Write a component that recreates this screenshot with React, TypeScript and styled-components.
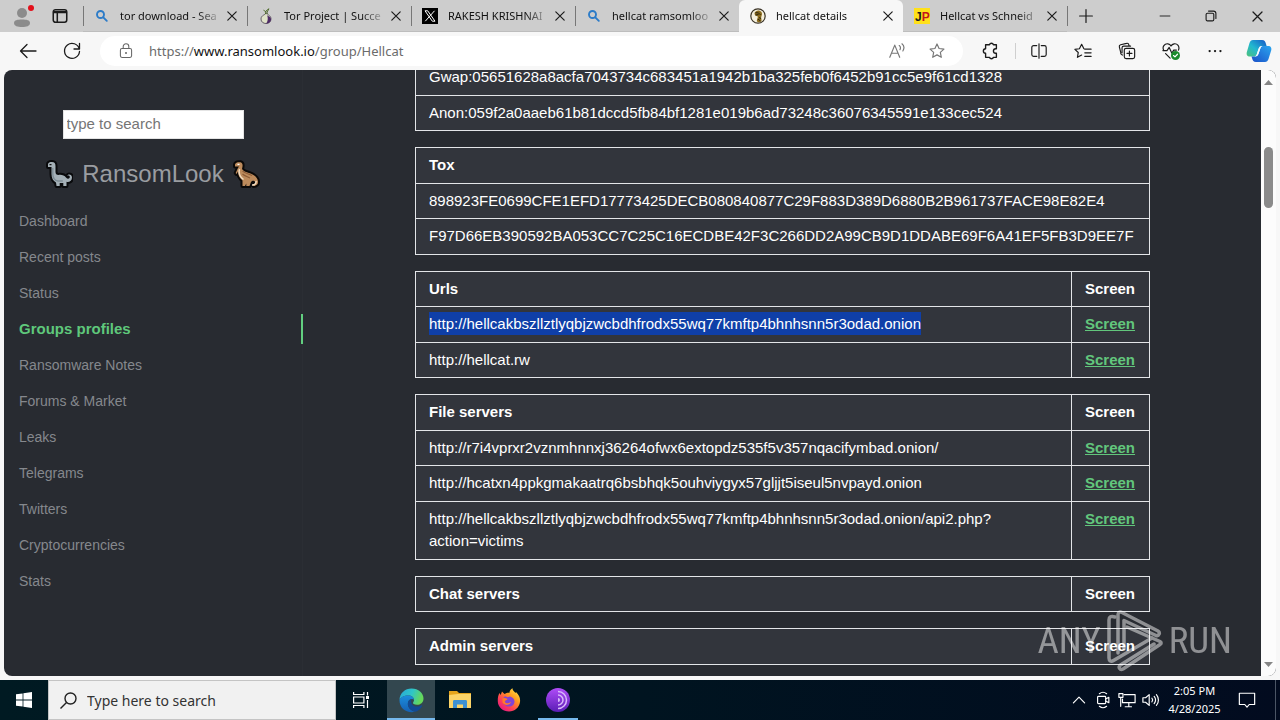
import React from "react";
import styled, { createGlobalStyle, css } from "styled-components";

const ui = `"Noto Sans", "Open Sans", sans-serif`;
const web = `"Liberation Sans", Arial, sans-serif`;

const Global = createGlobalStyle`
  *, *::before, *::after { box-sizing: border-box; }
  body { margin: 0; font-family: ${web}; background: #f7f7f7; }
  button { font: inherit; color: inherit; background: none; border: 0; padding: 0; }
  svg { display: block; flex: none; }
`;

const Screen = styled.div`
  display: flex;
  flex-direction: column;
  height: 100vh;
  overflow: hidden;
`;

/* ---------- browser chrome ---------- */
const TabStrip = styled.header`
  display: flex;
  height: 32px;
  flex: none;
  background: #cdcdcd;
  font-family: ${ui};
  font-size: 11px;
  color: #111;
`;
const StripTools = styled.div`
  display: flex;
  align-items: center;
  justify-content: space-between;
  width: 83px;
  padding: 0 14px 0 12px;
`;
const TabBox = styled.div<{ $active?: boolean; $line?: boolean }>`
  display: flex;
  align-items: center;
  width: 164px;
  padding: 0 6px 0 11px;
  ${(p) =>
    p.$active
      ? css`
          background: #f7f7f7;
          border-radius: 6px 6px 0 0;
        `
      : css`
          border-bottom: 1px solid #bdbdbd;
        `}
  position: relative;
  &::before {
    content: "";
    position: absolute;
    left: 0;
    top: 6px;
    width: 1px;
    height: 20px;
    background: ${(p) => (p.$line ? "#777" : "transparent")};
  }
`;
const TabTitle = styled.button`
  flex: 1;
  margin-left: 10px;
  overflow: hidden;
  white-space: nowrap;
  text-align: left;
  line-height: 20px;
  mask-image: linear-gradient(to right, #000 75%, transparent);
`;
const CloseButton = styled.button`
  display: grid;
  place-items: center;
  width: 18px;
  height: 20px;
`;
const StripDivider = styled.span`
  align-self: center;
  width: 1px;
  height: 20px;
  background: #777;
`;
const NewTab = styled.button`
  display: grid;
  place-items: center;
  width: 36px;
`;
const Spacer = styled.div`
  flex: 1;
`;
const WindowButton = styled.button`
  display: grid;
  place-items: center;
  width: 46px;
`;
const Toolbar = styled.nav`
  display: flex;
  align-items: center;
  height: 38px;
  flex: none;
  padding: 0 0 0 6px;
  background: #f7f7f7;
`;
const ToolButton = styled.button<{ $width?: number }>`
  display: grid;
  place-items: center;
  width: ${(p) => p.$width ?? 44}px;
  height: 30px;
`;
const Divider = styled.span`
  width: 1px;
  height: 16px;
  margin: 0 1px 0 2px;
  background: #cfcfcf;
`;
const AddressBar = styled.div`
  display: flex;
  align-items: center;
  flex: 1;
  height: 30px;
  margin: 0 6px;
  padding: 0 6px 0 18px;
  border-radius: 15px;
  background: #fff;
  font-family: ${ui};
  font-size: 13px;
  color: #6b6b6b;
  b {
    font-weight: 400;
    color: #111;
  }
`;
const Url = styled.span`
  flex: 1;
  margin-left: 15px;
`;
const AddressButton = styled.button`
  display: grid;
  place-items: center;
  width: 40px;
  height: 28px;
`;

/* ---------- page ---------- */
const Viewport = styled.div`
  display: flex;
  flex: 1;
  min-height: 0;
  margin: 0 4px 4px;
  border-radius: 8px;
  overflow: hidden;
  background: #282b31;
  position: relative;
`;
const Sidebar = styled.aside`
  display: flex;
  flex-direction: column;
  width: 299px;
  flex: none;
  padding-top: 40px;
  border-right: 1px solid #2b2e34;
`;
const Search = styled.input`
  align-self: center;
  width: 181px;
  height: 29px;
  padding: 0 3px 2px;
  border: 1px solid #e4e4e4;
  border-radius: 0;
  background: #fff;
  font: 15px ${web};
  &::placeholder {
    color: #757575;
    opacity: 1;
  }
`;
const Brand = styled.a`
  display: flex;
  align-items: center;
  justify-content: center;
  gap: 9px;
  height: 36px;
  margin: 17px 0 14px;
  font-size: 24px;
  color: #9a9da1;
  text-decoration: none;
`;
const NavList = styled.nav`
  display: flex;
  flex-direction: column;
  gap: 6px;
`;
const NavLink = styled.a<{ $active?: boolean }>`
  padding-left: 15px;
  line-height: 30px;
  font-size: ${(p) => (p.$active ? 15 : 14)}px;
  margin-right: -1px;
  border-right: 2px solid ${(p) => (p.$active ? "#62cf80" : "transparent")};
  color: ${(p) => (p.$active ? "#5fc87b" : "#85888d")};
  font-weight: ${(p) => (p.$active ? 700 : 400)};
  text-decoration: none;
`;
const Main = styled.main`
  flex: 1;
  min-width: 0;
  padding: 0 111px 0 112px;
  overflow: hidden;
`;
const Scrolled = styled.div`
  margin-top: -11px;
`;
const DataTable = styled.table`
  width: 100%;
  margin-bottom: 16px;
  border-collapse: collapse;
  background: #32353c;
  color: #fff;
  font-size: 15px;
  line-height: 1.5;
  th,
  td {
    padding: 6px 13px;
    border: 1px solid #e3e5e8;
    text-align: left;
    vertical-align: top;
    font-size: 15px;
  }
`;
const ShotCell = styled.td`
  width: 78px;
  font-weight: 700;
`;
const ShotHead = styled.th`
  width: 78px;
`;
const ShotLink = styled.a`
  color: #62c67c;
`;
const Selected = styled.mark`
  padding: 3px 0;
  background: #0f3fa8;
  color: #fff;
`;
const ScrollTrack = styled.div`
  display: flex;
  flex-direction: column;
  align-items: center;
  width: 15px;
  flex: none;
  padding: 10px 0 9px;
  background: #fcfcfc;
`;
const Thumb = styled.div`
  width: 9px;
  height: 61px;
  margin-top: 62px;
  border-radius: 5px;
  background: #8b8b8b;
`;
const Watermark = styled.div`
  position: absolute;
  right: 44px;
  bottom: 3px;
  display: flex;
  align-items: center;
  gap: 6px;
  color: #fff;
  opacity: 0.48;
  font-family: "Liberation Sans Narrow", "Roboto Condensed", Roboto, sans-serif;
  font-size: 37px;
  line-height: 64px;
  pointer-events: none;
`;

/* ---------- taskbar ---------- */
const Taskbar = styled.footer`
  display: flex;
  height: 40px;
  flex: none;
  background: linear-gradient(to right, #001a22, #001420 50%, #020b1f);
  color: #fff;
  font-family: ${ui};
`;
const TaskButton = styled.button<{ $on?: boolean; $running?: boolean; $width?: number }>`
  display: grid;
  place-items: center;
  width: ${(p) => p.$width ?? 49}px;
  background: ${(p) => (p.$on ? "#33474f" : "none")};
  position: relative;
  &::after {
    content: "";
    position: absolute;
    left: ${(p) => (p.$on ? 0 : 5)}px;
    right: ${(p) => (p.$on ? 0 : 4)}px;
    bottom: 0;
    height: 2px;
    background: ${(p) => (p.$on || p.$running ? "#76b9ed" : "transparent")};
  }
`;
const TaskSearch = styled.label`
  display: flex;
  align-items: center;
  gap: 10px;
  width: 288px;
  padding: 0 11px;
  background: #f1f1f1;
  border: 1px solid #c4c4c4;
  input {
    flex: 1;
    min-width: 0;
    border: 0;
    padding: 0;
    background: none;
    font: 14px ${ui};
  }
  input::placeholder {
    color: #333;
    opacity: 1;
  }
`;
const TrayButton = styled.button`
  display: grid;
  place-items: center;
  width: 24px;
`;
const Clock = styled.time`
  width: 63px;
  padding-top: 2px;
  text-align: center;
  font-size: 11px;
  line-height: 18px;
  white-space: nowrap;
`;
const Notice = styled.button`
  display: grid;
  place-items: center;
  width: 42px;
`;
const ShowDesktop = styled.button`
  width: 5px;
  margin-left: 7px;
  border-left: 1px solid #4b5565;
`;

/* ---------- icons ---------- */
type IconProps = { size?: number; w?: number; color?: string; children: React.ReactNode };
const Line = ({ size = 20, w = 1.3, color = "#1b1b1b", children }: IconProps) => (
  <svg width={size} height={size} viewBox="0 0 20 20" fill="none" stroke={color} strokeWidth={w} strokeLinecap="round" strokeLinejoin="round">
    {children}
  </svg>
);
const Cross = ({ size = 14 }: { size?: number }) => (
  <Line size={size} w={1.7}><path d="M4 4l12 12M16 4L4 16" /></Line>
);
const STAR = "M10 2.2l2.3 5 5.4.7-4 3.7 1.1 5.4-4.8-2.7L5.2 17l1.1-5.4-4-3.7 5.4-.7z";

const SearchFav = () => (
  <svg width="16" height="16" viewBox="0 0 16 16" fill="none" stroke="#2d7cc8" strokeWidth="1.9" strokeLinecap="round">
    <circle cx="6.5" cy="6.5" r="3.5" /><path d="M9.300 9.300l3.500 3.500" />
  </svg>
);
const OnionFav = () => (
  <svg width="16" height="16" viewBox="0 0 16 16">
    <path d="M8 5C7.600 7 3 7 3 11c0 3 2.500 4.500 5 4.500s5-1.500 5-4.500c0-4-4.200-4-4-6z" fill="#dfe2c8" stroke="#4b4453" strokeWidth=".8" />
    <path d="M8.500 6c0 2 4.500 2 4.500 5.200 0 2.800-2.300 4.300-5 4.300 2-2 2.500-6 .5-9.500z" fill="#4e2b66" />
    <path d="M7.500 6C7 3.500 8.500 2 11 .8 10 2.500 9 3.500 9 6M7.800 4C7 3 6.500 2.500 5.500 2.200" stroke="#4f6b2a" fill="none" />
  </svg>
);
const XFav = () => (
  <svg width="16" height="16" viewBox="0 0 16 16">
    <path fill="#000" d="M0 0h16v16H0z" />
    <path d="M3 2.800h2.700L13 13.200h-2.700zM12.500 2.800L3.300 13.200" stroke="#fff" strokeWidth="1" fill="none" />
  </svg>
);
const HellcatFav = () => (
  <svg width="16" height="16" viewBox="0 0 16 16">
    <circle cx="8" cy="8" r="7.2" fill="#f5efdc" stroke="#3a3326" strokeWidth="1.2" />
    <path d="M4.500 5c1-2 3.500-3 5.500-2 2 .8 2.500 3 1.500 5-1 2 .5 3 0 5-1.500 1.500-3.500 1.500-4.500.5C6.500 11 8.500 9.500 7.500 8.200 6 8 4.500 7.500 4.500 5z" fill="#8a6a1c" />
    <path d="M5.500 4.800c2-.5 4 .5 5 2M5.500 7l3-.5M8 11l2.500 2M9 9.500l2 1" stroke="#2d2410" fill="none" />
  </svg>
);
const JPFav = () => (
  <svg width="16" height="16" viewBox="0 0 16 16">
    <path fill="#ffe11a" d="M0 0h16v16H0z" />
    <text x="1" y="12.5" fontSize="12" fontWeight="900" fontFamily="Liberation Sans"><tspan fill="#1c1c1c">J</tspan><tspan fill="#c4161c">P</tspan></text>
  </svg>
);
const Copilot = () => (
  <svg width="26" height="24" viewBox="0 0 26 24">
    <defs>
      <linearGradient id="cpA" x1="0" y1="1" x2="1" y2="0"><stop offset="0" stopColor="#4ec27a" /><stop offset=".45" stopColor="#22b8d0" /><stop offset="1" stopColor="#1556c8" /></linearGradient>
      <linearGradient id="cpB" x1="0" y1="1" x2="1" y2="0"><stop offset="0" stopColor="#1a50c8" /><stop offset="1" stopColor="#2aa5ef" /></linearGradient>
    </defs>
    <path d="M7 1h9c2.500 0 3.300 1.500 4 4l.6 2H16c-2 0-2.800 1-3.500 3l-1.800 5.500c-.5 1.500-1.500 2-3 2H4c-3 0-4-2-3-5L3.500 4C4.200 2 5.200 1 7 1z" fill="url(#cpA)" />
    <path d="M19 23h-9c-2.500 0-3.300-1.500-4-4l-.5-1.500H9c2 0 3-1 3.600-3L14.500 9c.5-1.500 1.500-2 3-2H22c3 0 4 2 3 5l-2.500 8c-.7 2-1.700 3-3.500 3z" fill="url(#cpB)" />
    <path d="M12.500 10c.7-2 1.500-3 3.500-3h1.500c-1.500 0-2.500.5-3 2l-1.900 5.500c-.6 2-1.600 3-3.600 3H7.700c1.500 0 2.500-.5 3-2z" fill="#f1f8ff" />
  </svg>
);
const Sauropod = () => (
  <svg width="27" height="28" viewBox="0 0 27 28">
    <path d="M2 4.500C2 2.500 4 2 6 2c2.500 0 3.500 1.500 3.500 4v6c0 2 1 3 3 3 3-.5 6 .5 7.500 2.500 1.500 1.800 3.500 1.500 3.800-.2.2-1.600-1.500-2.100-2.600-1.300 1-2.500 4.800-1.500 4.800 1.500 0 3.500-3 5-5.500 4.300V26h-3.200v-3h-3.600v3h-3.200l-.5-3.500C7 21 5.500 18 5.500 14V7H2z" fill="#a4b0b7" stroke="#090a0c" strokeWidth="4" strokeLinejoin="round" paintOrder="stroke" />
    <path d="M6.800 8v6c0 4 2 6.500 5 7h5" stroke="#7d8c95" strokeWidth="1.400" fill="none" />
    <path d="M3.500 4h2v1.200h-2z" fill="#111" />
  </svg>
);
const Raptor = () => (
  <svg width="27" height="28" viewBox="0 0 27 28">
    <path d="M2 4.500C2.500 2.500 5 2 7.500 2.300 9.300 2.800 9.800 4.500 9.500 6.500L9 9c1 2 4 3 7 4 5 1.500 8.500 4.500 9 8.500.3 3-2 4.500-4.500 4.500l-1-1.500c2 0 3.200-1 2.500-2.800-.7-1.700-3-1.200-4 .3L16.500 26h-3.200v-2.500L12 26H9.500v-5.500C6.500 18 5 15 5 11.500L3.500 14l-.8-1 2-4.500L6 6.500H2z" fill="#bd8b5c" stroke="#0b0908" strokeWidth="4" strokeLinejoin="round" paintOrder="stroke" />
    <path d="M9.500 11c2 2.500 6 2.500 9.500 4.500M9.500 14c2 2 4.500 2.500 7.500 4" stroke="#8d5c36" strokeWidth="1.200" fill="none" />
    <path d="M6.500 9c-1 4 .5 8 4 10.500M19 25c2.500.3 4.500-1.500 4-4" stroke="#f0dcc2" strokeWidth="1.500" fill="none" />
    <path d="M4.500 3.800h2V5h-2z" fill="#fff" />
  </svg>
);
const EdgeLogo = () => (
  <svg width="25" height="25" viewBox="0 0 25 25">
    <defs>
      <linearGradient id="edA" x1="0" y1="0" x2="1" y2=".3"><stop offset="0" stopColor="#28a7d8" /><stop offset=".55" stopColor="#2fc5c8" /><stop offset="1" stopColor="#66d85a" /></linearGradient>
      <linearGradient id="edB" x1="0" y1="0" x2="0" y2="1"><stop offset="0" stopColor="#1c8ddc" /><stop offset="1" stopColor="#1560b4" /></linearGradient>
    </defs>
    <path d="M.5 12C.8 5 6 .5 12.500.5c7 0 12 4.700 12 10 0 4-3 6.300-6.500 6.300-3 0-4.200-1.200-4-2 .4-.8 1-1.300 1-3 0-2.300-2.300-4.300-5.500-4.300-4.500 0-8 2-9 4.500z" fill="url(#edA)" />
    <path d="M.5 12c1-3 4.500-4.500 8.500-4.500 3.700 0 6 2 6 4.300-1-1.200-5-1.300-6 2.700-1 4.500 3 8.500 7.500 9.300C8 26 .3 20.500.5 12z" fill="url(#edB)" />
    <path d="M9 14.500c.4-2 1.800-3.200 3.500-3.600-1.300 2.600.3 7.600 5.500 7.600 2 0 3.500-.8 4.500-1.300.6-.2.900.2.600.7-1.600 2.900-4 5-6.600 5.900C12 23 8 19 9 14.500z" fill="#124a94" />
  </svg>
);
const Folder = () => (
  <svg width="22" height="20" viewBox="0 0 22 20">
    <path d="M0 1h8l2 2h12v5H0z" fill="#e5a51c" />
    <path d="M0 5l9-1h13v14H0z" fill="#fbd468" />
    <path d="M4 18v-6.500c0-1 .5-1.500 1.500-1.500h11c1 0 1.500.5 1.500 1.500V18h-4v-3.500H8V18z" fill="#3e91d2" />
  </svg>
);
const Firefox = () => (
  <svg width="24" height="24" viewBox="0 0 24 24">
    <defs>
      <linearGradient id="ffA" x1="1" y1="0" x2=".2" y2="1"><stop offset="0" stopColor="#fff44f" /><stop offset=".4" stopColor="#ff9a1f" /><stop offset=".7" stopColor="#ff4352" /><stop offset="1" stopColor="#e31587" /></linearGradient>
    </defs>
    <path d="M2.500 5l1.200 2L5 3.500 7.500 6c2-1.500 4-1.300 5-1.200C12.500 2.500 14 1 15.500.3c0 2.200 1.500 3 3 4.700L19 4c3 2.800 4.500 6 4 10-.7 5.500-5.300 9.500-11 9.500S1 19.500.8 13.500C.7 10 1 7.500 2.500 5z" fill="url(#ffA)" />
    <path d="M6.500 10c1-2 3-1.500 4-.8L13 8.500c2.500.5 4.500 2.500 4.500 5 0 3-2.500 5-5.500 5s-6-2-6-5.500z" fill="#8143d6" />
    <path d="M5.500 10.500c1.500-1 3.500-.5 5 .5-.2 1.200-2.500 1.300-2.700 2.700 1.200 2 4.200 2 6.200 0-1 4-6.500 4.300-8.500.8z" fill="#ff7a2a" />
  </svg>
);
const TorLogo = () => (
  <svg width="24" height="24" viewBox="0 0 24 24">
    <defs><linearGradient id="trA" x1="0" y1="0" x2="0" y2="1"><stop offset="0" stopColor="#b04cf8" /><stop offset="1" stopColor="#5a1db5" /></linearGradient></defs>
    <circle cx="12" cy="12" r="12" fill="url(#trA)" />
    <path d="M12 3.500a8.500 8.500 0 010 17M12 7a5 5 0 010 10" stroke="#d9b8fb" strokeWidth="1.500" fill="none" />
    <path d="M12 10a2 2 0 010 4z" fill="#d9b8fb" />
  </svg>
);
const PlayMark = () => (
  <svg width="56" height="62" viewBox="0 0 56 62" fill="none" stroke="#fff" strokeWidth="3.5" strokeLinejoin="round" strokeLinecap="round">
    <path d="M8 7c-4-1.500-6 0-6 3v38c0 3 2 4 4.500 2.500L45 28" />
    <path d="M11 43V5c0-3 2-3.500 4-2.500L51 21c2.500 1.500 1 5.500-2 4.500L17 10.500V39" />
    <path d="M20 17l33 14.500c1.500.8 1.500 2.200 0 3L16 59c-3 1.500-5.500-2-2.500-4L47 34" />
  </svg>
);

/* ---------- parts ---------- */
const tabs = [
  { icon: <SearchFav />, title: "tor download - Sea", line: true },
  { icon: <OnionFav />, title: "Tor Project | Succe", line: true },
  { icon: <XFav />, title: "RAKESH KRISHNAI", line: true },
  { icon: <SearchFav />, title: "hellcat ramsomloo", line: true },
  { icon: <HellcatFav />, title: "hellcat details", active: true },
  { icon: <JPFav />, title: "Hellcat vs Schneid" },
];

const navItems = ["Dashboard", "Recent posts", "Status", "Groups profiles", "Ransomware Notes", "Forums & Market", "Leaks", "Telegrams", "Twitters", "Cryptocurrencies", "Stats"];

const IdTable = ({ title, rows }: { title?: string; rows: string[] }) => (
  <DataTable>
    {title && <thead><tr><th>{title}</th></tr></thead>}
    <tbody>{rows.map((r) => <tr key={r}><td>{r}</td></tr>)}</tbody>
  </DataTable>
);

const ServerTable = ({ title, rows = [], selected }: { title: string; rows?: string[]; selected?: number }) => (
  <DataTable>
    <thead><tr><th>{title}</th><ShotHead>Screen</ShotHead></tr></thead>
    <tbody>
      {rows.map((r, i) => (
        <tr key={r}>
          <td>{i === selected ? <Selected>{r}</Selected> : r}</td>
          <ShotCell><ShotLink href="#">Screen</ShotLink></ShotCell>
        </tr>
      ))}
    </tbody>
  </DataTable>
);

export default function App() {
  return (
    <Screen>
      <Global />
      <TabStrip>
        <StripTools>
          <button aria-label="Profile">
            <svg width="22" height="24" viewBox="0 0 22 24">
              <circle cx="10" cy="9" r="5" fill="#8b8b8b" />
              <path d="M2 19c0-3 3.500-3.500 8-3.500s8 .5 8 3.500-3.500 4-8 4-8-1-8-4z" fill="#8b8b8b" />
              <circle cx="19" cy="4" r="3" fill="#e3101b" />
            </svg>
          </button>
          <button aria-label="Tab actions">
            <Line size={18} w={1.7}><rect x="2.5" y="3" width="15" height="14" rx="2.5" /><path d="M3 5.200h14M3 6h14M7 6v11" /></Line>
          </button>
        </StripTools>
        {tabs.map((t) => (
          <TabBox key={t.title} $active={t.active} $line={t.line}>
            {t.icon}
            <TabTitle>{t.title}</TabTitle>
            <CloseButton aria-label="Close tab"><Cross /></CloseButton>
          </TabBox>
        ))}
        <StripDivider />
        <NewTab aria-label="New tab"><Line size={16} w={1.5}><path d="M10 2v16M2 10h16" /></Line></NewTab>
        <Spacer />
        <WindowButton aria-label="Minimize"><Line size={14}><path d="M3 10h14" /></Line></WindowButton>
        <WindowButton aria-label="Restore">
          <Line size={14} w={1.6}><rect x="3" y="6" width="11" height="11" rx="2" /><path d="M6.500 3h7A3.500 3.500 0 0117 6.500v7" /></Line>
        </WindowButton>
        <WindowButton aria-label="Close"><Cross size={15} /></WindowButton>
      </TabStrip>

      <Toolbar>
        <ToolButton aria-label="Back"><Line><path d="M18 10H2.500M9 3.500L2.500 10 9 16.500" /></Line></ToolButton>
        <ToolButton aria-label="Reload"><Line><path d="M17.300 8A7.500 7.500 0 1017.500 10.500M17.500 2.500V8H12" /></Line></ToolButton>
        <AddressBar>
          <Line size={16} color="#666"><rect x="3" y="7" width="14" height="11" rx="2" /><path d="M6.500 7V4.500a3.500 3.500 0 017 0V7" /><path d="M10 12.500v.1" strokeWidth="2.5" /></Line>
          <Url>https://<b>www.ransomlook.io</b>/group/Hellcat</Url>
          <AddressButton aria-label="Read aloud"><Line size={18} color="#777"><path d="M2 17L7.500 3.500 13 17M4 12.500h7M12.500 4c1.500 1 1.500 3 .8 4.500M15.500 2c2.500 2 2.500 5.500 1 8" /></Line></AddressButton>
          <AddressButton aria-label="Favorite"><Line size={18} color="#777"><path d={STAR} /></Line></AddressButton>
        </AddressBar>
        <ToolButton aria-label="Extensions"><Line size={18} w={1.5}><path d="M4 3h4.300a2.300 2.300 0 014.400 0H16v4.500h-.8a2.400 2.400 0 000 5h.8V17h-3.300a2.300 2.300 0 01-4.400 0H4v-4.500a2.400 2.400 0 010-5z" /></Line></ToolButton>
        <Divider />
        <ToolButton aria-label="Split screen"><Line size={18}><path d="M7.500 4H4a2 2 0 00-2 2v8a2 2 0 002 2h3.500M12.500 4H16a2 2 0 012 2v8a2 2 0 01-2 2h-3.500M10 2v16" /></Line></ToolButton>
        <ToolButton aria-label="Favorites"><Line size={18}><path d="M11 7.500L8.500 2.500 6 7.500l-5 .7 3.700 3.500L3.800 17l4.700-2.500M12 8h7M12 12h7M12 16h7" /></Line></ToolButton>
        <ToolButton aria-label="Collections"><Line size={18}><rect x="7" y="7" width="11.5" height="11.5" rx="2" /><path d="M12.700 10v5.500M10 12.700h5.500M5 14.500l-.7-.3a2 2 0 01-1.200-2.500L1.500 5.500a2 2 0 011.400-2.400L9.500 1.500A2 2 0 0112 3l.5 1.500M4.500 12V6.500a2 2 0 012-2H14" /></Line></ToolButton>
        <ToolButton aria-label="Browser essentials">
          <Line size={18}>
            <path d="M2 9.500C-.3 5.500 3 1.500 6.500 2 8.500 2.300 9.500 3.500 10 4.500 10.500 3.500 11.500 2.300 13.500 2 17 1.500 20 5 18.300 9M4 13l5 5M1 9.500h4.500L8 6l3 6.500 2-3.500h3" />
            <circle cx="15" cy="15" r="5" fill="#1c8a2c" stroke="none" /><path d="M12.800 15l1.600 1.600 2.800-3" stroke="#fff" />
          </Line>
        </ToolButton>
        <ToolButton aria-label="Settings and more"><Line size={18} w={2.5}><path d="M4 10h.1M10 10h.1M16 10h.1" /></Line></ToolButton>
        <ToolButton $width={43} aria-label="Copilot"><Copilot /></ToolButton>
      </Toolbar>

      <Viewport>
        <Sidebar>
          <Search type="search" aria-label="Search" placeholder="type to search" />
          <Brand href="#"><Sauropod />RansomLook<Raptor /></Brand>
          <NavList>
            {navItems.map((n) => <NavLink key={n} href="#" $active={n === "Groups profiles"}>{n}</NavLink>)}
          </NavList>
        </Sidebar>
        <Main>
          <Scrolled>
            <IdTable rows={["Gwap:05651628a8acfa7043734c683451a1942b1ba325feb0f6452b91cc5e9f61cd1328", "Anon:059f2a0aaeb61b81dccd5fb84bf1281e019b6ad73248c36076345591e133cec524"]} />
            <IdTable title="Tox" rows={["898923FE0699CFE1EFD17773425DECB080840877C29F883D389D6880B2B961737FACE98E82E4", "F97D66EB390592BA053CC7C25C16ECDBE42F3C266DD2A99CB9D1DDABE69F6A41EF5FB3D9EE7F"]} />
            <ServerTable title="Urls" selected={0} rows={["http://hellcakbszllztlyqbjzwcbdhfrodx55wq77kmftp4bhnhsnn5r3odad.onion", "http://hellcat.rw"]} />
            <ServerTable
              title="File servers"
              rows={[
                "http://r7i4vprxr2vznmhnnxj36264ofwx6extopdz535f5v357nqacifymbad.onion/",
                "http://hcatxn4ppkgmakaatrq6bsbhqk5ouhviygyx57gljjt5iseul5nvpayd.onion",
                "http://hellcakbszllztlyqbjzwcbdhfrodx55wq77kmftp4bhnhsnn5r3odad.onion/api2.php?action=victims",
              ]}
            />
            <ServerTable title="Chat servers" />
            <ServerTable title="Admin servers" />
          </Scrolled>
        </Main>
        <ScrollTrack>
          <svg width="9" height="5" viewBox="0 0 9 5"><path d="M0 5L4.500 0 9 5z" fill="#858585" /></svg>
          <Thumb />
          <Spacer />
          <svg width="9" height="5" viewBox="0 0 9 5"><path d="M0 0l4.500 5L9 0z" fill="#858585" /></svg>
        </ScrollTrack>
        <Watermark><span>ANY</span><PlayMark /><span>RUN</span></Watermark>
      </Viewport>

      <Taskbar>
        <TaskButton $width={48} aria-label="Start">
          <svg width="16" height="16" viewBox="0 0 16 16" fill="#fff"><path d="M0 2.300L6.600 1.400v6.200H0zM7.400 1.300L16 0v7.600H7.400zM0 8.400h6.600v6.200L0 13.700zM7.400 8.400H16V16l-8.600-1.300z" /></svg>
        </TaskButton>
        <TaskSearch>
          <svg width="17" height="17" viewBox="0 0 17 17" fill="none" stroke="#222" strokeWidth="1.4"><circle cx="10.5" cy="6.5" r="5.5" /><path d="M6.500 10.500L.5 16.500" /></svg>
          <input type="text" aria-label="Windows search" placeholder="Type here to search" />
        </TaskSearch>
        <TaskButton $width={51} aria-label="Task view">
          <svg width="17" height="16" viewBox="0 0 17 16" fill="none" stroke="#fff" strokeWidth="1.2"><path d="M.6 0v2.500h10.300V0M.6 16v-2.500h10.300V16M.6 5h10.300v6H.6zM14.500 0v3.500M14.500 8v8" /><path d="M13 4h3v3h-3z" fill="#fff" stroke="none" /></svg>
        </TaskButton>
        <TaskButton $on $width={48} aria-label="Microsoft Edge"><EdgeLogo /></TaskButton>
        <TaskButton aria-label="File Explorer"><Folder /></TaskButton>
        <TaskButton aria-label="Firefox"><Firefox /></TaskButton>
        <TaskButton $running aria-label="Tor Browser"><TorLogo /></TaskButton>
        <Spacer />
        <TrayButton aria-label="Show hidden icons"><Line size={14} color="#fff" w={1.7}><path d="M2 14l8-8 8 8" /></Line></TrayButton>
        <TrayButton aria-label="Meet now"><Line size={18} color="#fff"><rect x="4" y="6" width="9" height="8" rx="1" /><path d="M13 9l3.500-2v6L13 11M6 3c2.500-2 5.500-2 8 0M6 17c2.500 2 5.500 2 8 0" /></Line></TrayButton>
        <TrayButton aria-label="Network"><Line size={18} color="#fff"><path d="M7 4h12v9H5V9M12 13v4M8 17.500h7M1 3h4.500v4H1zM3 7v10" /></Line></TrayButton>
        <TrayButton aria-label="Volume"><Line size={18} color="#fff"><path d="M1 7.500h3L8 4v12l-4-3.500H1zM11 8c1 1.200 1 2.800 0 4M13.500 6c2 2.500 2 5.500 0 8M16 4c3 3.500 3 8.500 0 12" /></Line></TrayButton>
        <Clock>2:05 PM<br />4/28/2025</Clock>
        <Notice aria-label="Notifications"><Line size={18} color="#fff"><path d="M1.500 2.500h17v12.500h-6L10 18l-2.500-3h-6z" /></Line></Notice>
        <ShowDesktop aria-label="Show desktop" />
      </Taskbar>
    </Screen>
  );
}
